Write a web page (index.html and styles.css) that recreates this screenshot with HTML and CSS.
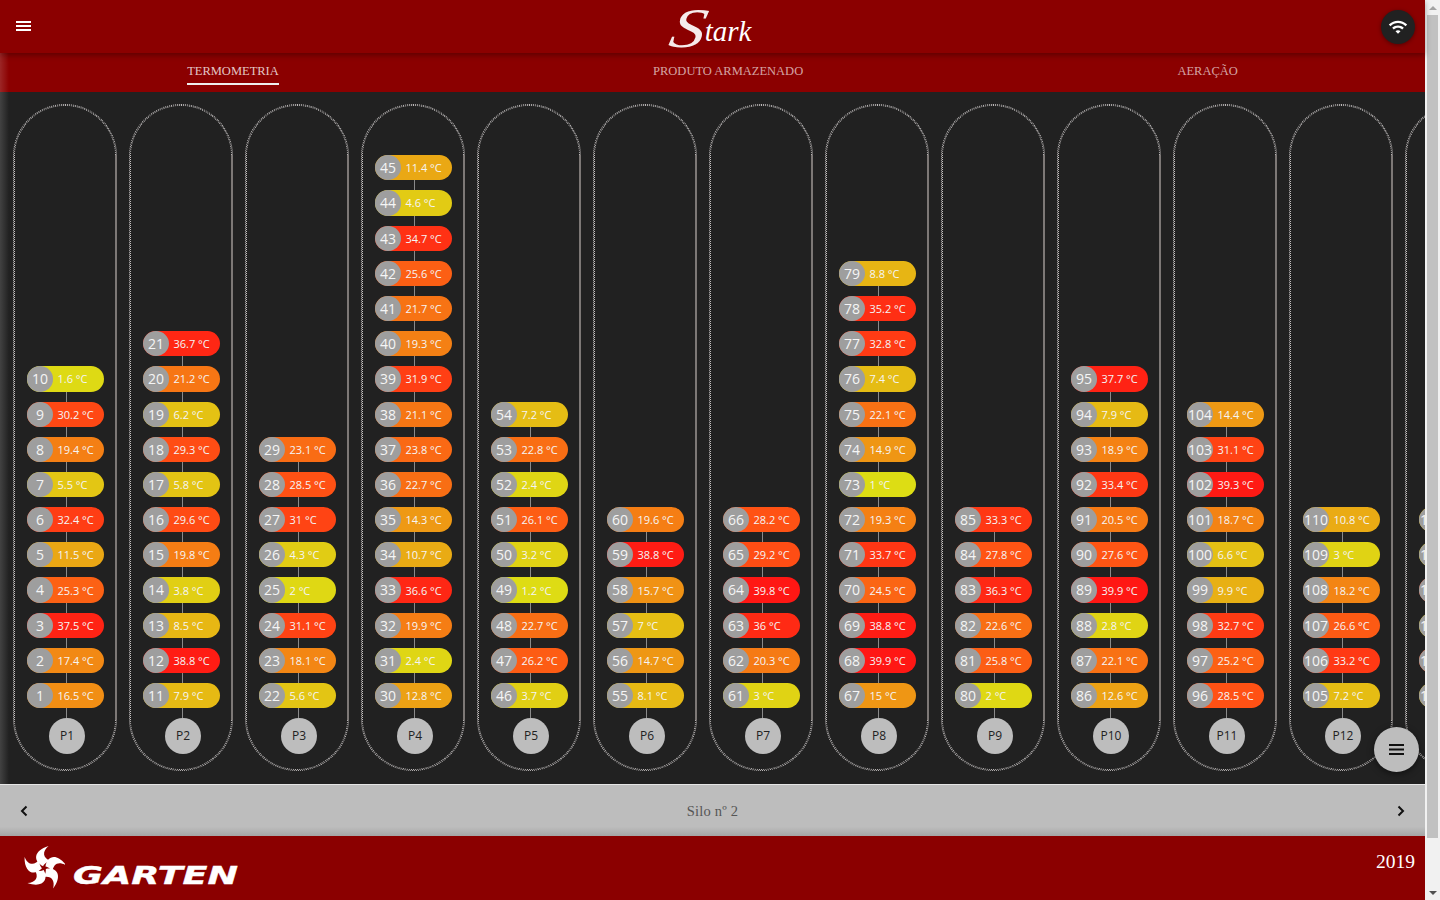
FILE: index.html
```html
<!DOCTYPE html>
<html lang="pt-BR">
<head>
<meta charset="utf-8">
<title>Stark - Termometria</title>
<link rel="stylesheet" href="styles.css">
</head>
<body>
<div class="app">
  <header class="topbar">
    <div class="topbar-side">
      <svg class="menu-icon" viewBox="0 0 15 10"><path d="M0 0h15v2H0zM0 4h15v2H0zM0 8h15v2H0z"/></svg>
    </div>
    <div class="brand"><span class="brand-cap">S</span><span class="brand-rest">tark</span></div>
    <div class="topbar-side topbar-right">
      <span class="wifi"><svg viewBox="0 0 24 24"><path d="M1 9l2 2c4.97-4.97 13.03-4.97 18 0l2-2C16.93 2.93 7.08 2.93 1 9zm8 8l3 3 3-3c-1.65-1.66-4.34-1.66-6 0zm-4-4l2 2c2.76-2.76 7.24-2.76 10 0l2-2C15.14 9.14 8.87 9.14 5 13z"/></svg></span>
    </div>
  </header>
  <div class="workspace">
    <nav class="tabs">
      <a class="tab tab-active">TERMOMETRIA</a>
      <a class="tab">PRODUTO ARMAZENADO</a>
      <a class="tab">AERAÇÃO</a>
    </nav>
    <main class="silos">
      <section class="silo"><ul class="sensors">
        <li style="--t:16.5"><b>1</b><span>16.5 °C</span></li><li style="--t:17.4"><b>2</b><span>17.4 °C</span></li><li style="--t:37.5"><b>3</b><span>37.5 °C</span></li><li style="--t:25.3"><b>4</b><span>25.3 °C</span></li><li style="--t:11.5"><b>5</b><span>11.5 °C</span></li><li style="--t:32.4"><b>6</b><span>32.4 °C</span></li><li style="--t:5.5"><b>7</b><span>5.5 °C</span></li><li style="--t:19.4"><b>8</b><span>19.4 °C</span></li><li style="--t:30.2"><b>9</b><span>30.2 °C</span></li><li style="--t:1.6"><b>10</b><span>1.6 °C</span></li>
      </ul><div class="cable">P1</div></section>
      <section class="silo"><ul class="sensors">
        <li style="--t:7.9"><b>11</b><span>7.9 °C</span></li><li style="--t:38.8"><b>12</b><span>38.8 °C</span></li><li style="--t:8.5"><b>13</b><span>8.5 °C</span></li><li style="--t:3.8"><b>14</b><span>3.8 °C</span></li><li style="--t:19.8"><b>15</b><span>19.8 °C</span></li><li style="--t:29.6"><b>16</b><span>29.6 °C</span></li><li style="--t:5.8"><b>17</b><span>5.8 °C</span></li><li style="--t:29.3"><b>18</b><span>29.3 °C</span></li><li style="--t:6.2"><b>19</b><span>6.2 °C</span></li><li style="--t:21.2"><b>20</b><span>21.2 °C</span></li><li style="--t:36.7"><b>21</b><span>36.7 °C</span></li>
      </ul><div class="cable">P2</div></section>
      <section class="silo"><ul class="sensors">
        <li style="--t:5.6"><b>22</b><span>5.6 °C</span></li><li style="--t:18.1"><b>23</b><span>18.1 °C</span></li><li style="--t:31.1"><b>24</b><span>31.1 °C</span></li><li style="--t:2"><b>25</b><span>2 °C</span></li><li style="--t:4.3"><b>26</b><span>4.3 °C</span></li><li style="--t:31"><b>27</b><span>31 °C</span></li><li style="--t:28.5"><b>28</b><span>28.5 °C</span></li><li style="--t:23.1"><b>29</b><span>23.1 °C</span></li>
      </ul><div class="cable">P3</div></section>
      <section class="silo"><ul class="sensors">
        <li style="--t:12.8"><b>30</b><span>12.8 °C</span></li><li style="--t:2.4"><b>31</b><span>2.4 °C</span></li><li style="--t:19.9"><b>32</b><span>19.9 °C</span></li><li style="--t:36.6"><b>33</b><span>36.6 °C</span></li><li style="--t:10.7"><b>34</b><span>10.7 °C</span></li><li style="--t:14.3"><b>35</b><span>14.3 °C</span></li><li style="--t:22.7"><b>36</b><span>22.7 °C</span></li><li style="--t:23.8"><b>37</b><span>23.8 °C</span></li><li style="--t:21.1"><b>38</b><span>21.1 °C</span></li><li style="--t:31.9"><b>39</b><span>31.9 °C</span></li><li style="--t:19.3"><b>40</b><span>19.3 °C</span></li><li style="--t:21.7"><b>41</b><span>21.7 °C</span></li><li style="--t:25.6"><b>42</b><span>25.6 °C</span></li><li style="--t:34.7"><b>43</b><span>34.7 °C</span></li><li style="--t:4.6"><b>44</b><span>4.6 °C</span></li><li style="--t:11.4"><b>45</b><span>11.4 °C</span></li>
      </ul><div class="cable">P4</div></section>
      <section class="silo"><ul class="sensors">
        <li style="--t:3.7"><b>46</b><span>3.7 °C</span></li><li style="--t:26.2"><b>47</b><span>26.2 °C</span></li><li style="--t:22.7"><b>48</b><span>22.7 °C</span></li><li style="--t:1.2"><b>49</b><span>1.2 °C</span></li><li style="--t:3.2"><b>50</b><span>3.2 °C</span></li><li style="--t:26.1"><b>51</b><span>26.1 °C</span></li><li style="--t:2.4"><b>52</b><span>2.4 °C</span></li><li style="--t:22.8"><b>53</b><span>22.8 °C</span></li><li style="--t:7.2"><b>54</b><span>7.2 °C</span></li>
      </ul><div class="cable">P5</div></section>
      <section class="silo"><ul class="sensors">
        <li style="--t:8.1"><b>55</b><span>8.1 °C</span></li><li style="--t:14.7"><b>56</b><span>14.7 °C</span></li><li style="--t:7"><b>57</b><span>7 °C</span></li><li style="--t:15.7"><b>58</b><span>15.7 °C</span></li><li style="--t:38.8"><b>59</b><span>38.8 °C</span></li><li style="--t:19.6"><b>60</b><span>19.6 °C</span></li>
      </ul><div class="cable">P6</div></section>
      <section class="silo"><ul class="sensors">
        <li style="--t:3"><b>61</b><span>3 °C</span></li><li style="--t:20.3"><b>62</b><span>20.3 °C</span></li><li style="--t:36"><b>63</b><span>36 °C</span></li><li style="--t:39.8"><b>64</b><span>39.8 °C</span></li><li style="--t:29.2"><b>65</b><span>29.2 °C</span></li><li style="--t:28.2"><b>66</b><span>28.2 °C</span></li>
      </ul><div class="cable">P7</div></section>
      <section class="silo"><ul class="sensors">
        <li style="--t:15"><b>67</b><span>15 °C</span></li><li style="--t:39.9"><b>68</b><span>39.9 °C</span></li><li style="--t:38.8"><b>69</b><span>38.8 °C</span></li><li style="--t:24.5"><b>70</b><span>24.5 °C</span></li><li style="--t:33.7"><b>71</b><span>33.7 °C</span></li><li style="--t:19.3"><b>72</b><span>19.3 °C</span></li><li style="--t:1"><b>73</b><span>1 °C</span></li><li style="--t:14.9"><b>74</b><span>14.9 °C</span></li><li style="--t:22.1"><b>75</b><span>22.1 °C</span></li><li style="--t:7.4"><b>76</b><span>7.4 °C</span></li><li style="--t:32.8"><b>77</b><span>32.8 °C</span></li><li style="--t:35.2"><b>78</b><span>35.2 °C</span></li><li style="--t:8.8"><b>79</b><span>8.8 °C</span></li>
      </ul><div class="cable">P8</div></section>
      <section class="silo"><ul class="sensors">
        <li style="--t:2"><b>80</b><span>2 °C</span></li><li style="--t:25.8"><b>81</b><span>25.8 °C</span></li><li style="--t:22.6"><b>82</b><span>22.6 °C</span></li><li style="--t:36.3"><b>83</b><span>36.3 °C</span></li><li style="--t:27.8"><b>84</b><span>27.8 °C</span></li><li style="--t:33.3"><b>85</b><span>33.3 °C</span></li>
      </ul><div class="cable">P9</div></section>
      <section class="silo"><ul class="sensors">
        <li style="--t:12.6"><b>86</b><span>12.6 °C</span></li><li style="--t:22.1"><b>87</b><span>22.1 °C</span></li><li style="--t:2.8"><b>88</b><span>2.8 °C</span></li><li style="--t:39.9"><b>89</b><span>39.9 °C</span></li><li style="--t:27.6"><b>90</b><span>27.6 °C</span></li><li style="--t:20.5"><b>91</b><span>20.5 °C</span></li><li style="--t:33.4"><b>92</b><span>33.4 °C</span></li><li style="--t:18.9"><b>93</b><span>18.9 °C</span></li><li style="--t:7.9"><b>94</b><span>7.9 °C</span></li><li style="--t:37.7"><b>95</b><span>37.7 °C</span></li>
      </ul><div class="cable">P10</div></section>
      <section class="silo"><ul class="sensors">
        <li style="--t:28.5"><b>96</b><span>28.5 °C</span></li><li style="--t:25.2"><b>97</b><span>25.2 °C</span></li><li style="--t:32.7"><b>98</b><span>32.7 °C</span></li><li style="--t:9.9"><b>99</b><span>9.9 °C</span></li><li style="--t:6.6"><b>100</b><span>6.6 °C</span></li><li style="--t:18.7"><b>101</b><span>18.7 °C</span></li><li style="--t:39.3"><b>102</b><span>39.3 °C</span></li><li style="--t:31.1"><b>103</b><span>31.1 °C</span></li><li style="--t:14.4"><b>104</b><span>14.4 °C</span></li>
      </ul><div class="cable">P11</div></section>
      <section class="silo"><ul class="sensors">
        <li style="--t:7.2"><b>105</b><span>7.2 °C</span></li><li style="--t:33.2"><b>106</b><span>33.2 °C</span></li><li style="--t:26.6"><b>107</b><span>26.6 °C</span></li><li style="--t:18.2"><b>108</b><span>18.2 °C</span></li><li style="--t:3"><b>109</b><span>3 °C</span></li><li style="--t:10.8"><b>110</b><span>10.8 °C</span></li>
      </ul><div class="cable">P12</div></section>
      <section class="silo"><ul class="sensors">
        <li style="--t:6"><b>111</b><span>6 °C</span></li><li style="--t:30"><b>112</b><span>30 °C</span></li><li style="--t:5"><b>113</b><span>5 °C</span></li><li style="--t:32"><b>114</b><span>32 °C</span></li><li style="--t:4"><b>115</b><span>4 °C</span></li><li style="--t:8"><b>116</b><span>8 °C</span></li>
      </ul><div class="cable">P13</div></section>
    </main>
    <button class="fab" type="button" aria-label="Menu">
      <svg viewBox="0 0 15 11"><path d="M0 0h15v2H0zM0 4.500h15v2H0zM0 9h15v2H0z"/></svg>
    </button>
  </div>
  <div class="pager">
    <svg class="chevron" viewBox="0 0 8 12"><path d="M6.500 1.500 2 6l4.500 4.500"/></svg>
    <span class="pager-title">Silo nº 2</span>
    <svg class="chevron" viewBox="0 0 8 12"><path d="M1.500 1.500 6 6l-4.500 4.500"/></svg>
  </div>
  <footer class="footer">
    <div class="garten">
      <svg class="swirl" viewBox="-23 -24 46 48">
        <defs><path id="blade" d="M-1-2C-12-7-12-19 5-24-2-18-2-11 8-7 3-7 1-5-1-2Z"/></defs>
        <use href="#blade"/>
        <use href="#blade" transform="rotate(72)"/>
        <use href="#blade" transform="rotate(144)"/>
        <use href="#blade" transform="rotate(216)"/>
        <use href="#blade" transform="rotate(288)"/>
      </svg>
      <span class="garten-name">GARTEN</span>
    </div>
    <span class="year">2019</span>
  </footer>
</div>
<aside class="scrollbar" aria-hidden="true">
  <span class="scroll-btn"><i class="arrow-up"></i></span>
  <span class="scroll-track"><i class="scroll-thumb"></i></span>
  <span class="scroll-btn"><i class="arrow-down"></i></span>
</aside>
</body>
</html>
```
FILE: styles.css
```css
* { box-sizing: border-box; }
html, body { margin: 0; height: 100%; overflow: hidden; }
body { display: flex; font-family: "Open Sans", sans-serif; background: #212121; }

.app { width: 1425px; height: 900px; display: flex; flex-direction: column; flex: none; }

.topbar {
  height: 53px; flex: none; display: flex; align-items: center; justify-content: space-between;
  background: #8b0000; position: relative; z-index: 3;
  box-shadow: 0 2px 6px rgba(0, 0, 0, .35);
}
.topbar-side { width: 200px; display: flex; align-items: center; padding-left: 16px; }
.topbar-right { justify-content: flex-end; padding: 0 10px 0 0; }
.menu-icon { width: 15px; height: 10px; fill: #fff; display: block; margin-top: -1px; }
.brand {
  display: flex; align-items: baseline; margin-right: 6px;
  font-family: "Liberation Serif", serif; font-style: italic; color: #fff; white-space: nowrap;
}
.brand-cap {
  display: block; font-size: 56px; line-height: 52px; margin: 0 5px 0 4px; color: rgba(255, 255, 255, .92);
  transform: translate(3px, 6px) scaleX(1.250) skewX(-10deg);
}
.brand-rest { display: block; font-size: 29px; line-height: 52px; }
.wifi {
  width: 34px; height: 34px; border-radius: 50%; background: #212121; display: flex;
  align-items: center; justify-content: center; box-shadow: 0 1px 4px rgba(0, 0, 0, .4);
}
.wifi svg { width: 20px; height: 20px; fill: #fff; }

.workspace { flex: 1; min-height: 0; display: flex; flex-direction: column; position: relative; }
.workspace::before {
  content: ""; position: absolute; left: 0; top: 0; bottom: 0; width: 9px; z-index: 2;
  background: linear-gradient(to right, rgba(255, 255, 255, .15), rgba(255, 255, 255, 0));
}
.tabs {
  height: 39px; flex: none; display: flex; justify-content: space-around; background: #8b0000;
  font-family: "Liberation Serif", serif; font-size: 12.500px;
}
.tab { height: 32px; padding-top: 11px; line-height: 15px; color: rgba(255, 255, 255, .65); }
.tab-active { color: rgba(255, 255, 255, .78); border-bottom: 2px solid #eee; }

.silos {
  flex: 1; min-height: 0; display: flex; gap: 12px; padding: 12px 13px 13px;
  overflow: hidden; background: #212121;
}
.silo {
  position: relative; flex: none; width: 104px; display: flex; flex-direction: column; justify-content: flex-end;
  border: 1px dotted #c4c0c0; border-radius: 52px; padding: 0 0 16px 1px;
}
.silo::before {
  content: ""; position: absolute; inset: 0; border: 1px dotted #c4c0c0; border-radius: 51px;
}
.silo::after {
  content: ""; position: absolute; right: -1px; top: 50px; bottom: 50px; width: 2px; background: #7d7876;
}
.sensors {
  list-style: none; margin: 0 0 9.800px 12px; padding: 0; display: flex;
  flex-direction: column-reverse; gap: 10px; position: relative;
}
.sensors li {
  position: relative; width: 77px; height: 25.200px; border-radius: 13px; display: flex;
  align-items: center; color: #f5f5f5;
  background: rgb(calc(220 + var(--t) * 1.25), calc(226 - var(--t) * 5.1), 20);
}
.sensors li::after {
  content: ""; position: absolute; left: 39px; top: 100%; width: 1px; height: 10px; background: #8a8a8a;
}
.sensors b {
  flex: none; width: 26px; height: 100%; border-radius: 50%; background: #9e9e9e; text-align: center;
  font-weight: 400; font-size: 14px; line-height: 25px;
}
.sensors span { font-size: 11px; margin-left: 4.500px; white-space: nowrap; }
.cable {
  width: 36px; height: 36px; flex: none; margin-left: 34px; border-radius: 50%; background: #bdbdbd;
  color: #222; font-size: 12px; line-height: 36px; text-align: center; position: relative;
}
.fab {
  position: absolute; left: 1374px; top: 674px; width: 45px; height: 45px; border: 0; border-radius: 50%;
  background: #bdbdbd; padding: 0; display: flex; align-items: center; justify-content: center;
  box-shadow: 0 2px 6px rgba(0, 0, 0, .5); z-index: 2;
}
.fab svg { width: 15px; height: 11px; fill: #111; }

.pager {
  height: 52px; flex: none; display: flex; align-items: center; justify-content: space-between;
  padding: 0 20px; border-top: 1px solid #e6e6e6; position: relative;
  background: linear-gradient(to bottom, #bdbdbd 82%, #a5a5a5 100%);
}
.chevron { width: 8px; height: 12px; fill: none; stroke: #111; stroke-width: 2; }
.pager-title { font-family: "Liberation Serif", serif; font-size: 14.500px; color: #555; letter-spacing: .2px; padding-top: 1px; }

.footer {
  height: 64px; flex: none; display: flex; align-items: center; justify-content: space-between;
  background: #8b0000; padding: 0 10px 14px 23px; color: #fff; overflow: hidden;
}
.garten { display: flex; align-items: flex-end; gap: 8px; padding-top: 14px; }
.swirl { width: 42px; height: 46px; fill: #fff; display: block; flex: none; }
.garten-name {
  display: block; width: 165px; font-family: "DejaVu Sans", sans-serif; font-weight: 700; font-style: italic;
  font-size: 25px; line-height: 30px; white-space: nowrap; transform-origin: left center;
  transform: scaleX(1.460); -webkit-text-stroke: .4px #fff;
}
.year { font-family: "Liberation Serif", serif; font-size: 19.500px; margin-top: 2px; }

.scrollbar { width: 15px; height: 900px; flex: none; display: flex; flex-direction: column; background: #f1f1f1; }
.scroll-btn { height: 15px; flex: none; display: flex; align-items: center; justify-content: center; }
.scroll-track { flex: 1; padding: 0 2px; }
.scroll-thumb { display: block; height: 823px; background: #c1c1c1; }
.arrow-up { border: 4px solid transparent; border-top: 0; border-bottom: 4px solid #a3a3a3; }
.arrow-down { border: 4px solid transparent; border-bottom: 0; border-top: 4px solid #505050; }
```
